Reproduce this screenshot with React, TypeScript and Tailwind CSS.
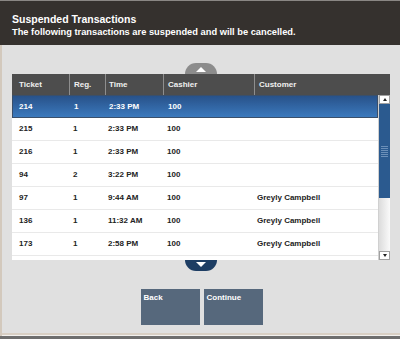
const rows = [
  { ticket: '214', reg: '1', time: '2:33 PM', cashier: '100', customer: '' },
  { ticket: '215', reg: '1', time: '2:33 PM', cashier: '100', customer: '' },
  { ticket: '216', reg: '1', time: '2:33 PM', cashier: '100', customer: '' },
  { ticket: '94', reg: '2', time: '3:22 PM', cashier: '100', customer: '' },
  { ticket: '97', reg: '1', time: '9:44 AM', cashier: '100', customer: 'Greyly Campbell' },
  { ticket: '136', reg: '1', time: '11:32 AM', cashier: '100', customer: 'Greyly Campbell' },
  { ticket: '173', reg: '1', time: '2:58 PM', cashier: '100', customer: 'Greyly Campbell' },
];

const cols = 'grid grid-cols-[57px_36px_58px_91px_1fr]';

export default function App() {
  return (
    <div className="flex h-[339px] w-[400px] flex-col font-['Liberation_Sans',Arial,sans-serif]">
      <div className="flex h-[45px] flex-col border-t border-[#8a8784] bg-[#35312e] pl-3 pt-[12px] font-bold text-white">
        <div className="text-[10.5px] leading-[13px]">Suspended Transactions</div>
        <div className="text-[9.3px] leading-[12px]">The following transactions are suspended and will be cancelled.</div>
      </div>

      <div className="flex flex-1 flex-col border-l-2 border-[#d3c9bd] bg-[#e0e0e0]">
        <div className="ml-[10px] mt-[18px] flex w-[378px] flex-col">
          {/* up chevron */}
          <div className="flex justify-center">
            <div className="flex h-[11px] w-[32px] items-center justify-center rounded-t-full bg-[#8c8c8c] pt-[2px]">
              <div className="h-0 w-0 border-x-[5px] border-b-[5px] border-x-transparent border-b-white" />
            </div>
          </div>

          {/* header */}
          <div className={`${cols} h-[21px] bg-[#4d4d4d] text-[8px] font-bold text-[#f0f0f0]`}>
            <div className="flex items-center pl-[7px]">Ticket</div>
            <div className="flex items-center border-l border-[#8e8e8e] pl-[4px]">Reg.</div>
            <div className="flex items-center border-l border-[#8e8e8e] pl-[3px]">Time</div>
            <div className="flex items-center border-l border-[#8e8e8e] pl-[4px]">Cashier</div>
            <div className="flex items-center border-l border-[#8e8e8e] pl-[4px]">Customer</div>
          </div>

          {/* body */}
          <div className="flex h-[165px] bg-white">
            <div className="flex flex-1 flex-col">
              {rows.map((r, i) =>
                i === 0 ? (
                  <div
                    key={i}
                    className={`${cols} h-[23px] border border-[#3a4f6a] bg-gradient-to-b from-[#28528a] to-[#3b79bd] text-[8px] font-bold text-white`}
                  >
                    <div className="flex items-center pl-[6px]">{r.ticket}</div>
                    <div className="flex items-center pl-[4px]">{r.reg}</div>
                    <div className="flex items-center pl-[3px]">{r.time}</div>
                    <div className="flex items-center pl-[4px]">{r.cashier}</div>
                    <div className="flex items-center pl-[3px]">{r.customer}</div>
                  </div>
                ) : (
                  <div
                    key={i}
                    className={`${cols} h-[23px] border-b border-[#e9e9e9] text-[8px] font-bold text-[#222]`}
                  >
                    <div className="flex items-center pl-[7px]">{r.ticket}</div>
                    <div className="flex items-center pl-[4px]">{r.reg}</div>
                    <div className="flex items-center pl-[3px]">{r.time}</div>
                    <div className="flex items-center pl-[4px]">{r.cashier}</div>
                    <div className="flex items-center pl-[3px]">{r.customer}</div>
                  </div>
                )
              )}
            </div>

            {/* scrollbar */}
            <div className="flex w-[12px] flex-col border-l border-[#d0d0d0] bg-gradient-to-r from-[#e8e8e8] to-[#f8f8f8]">
              <div className="flex h-[9px] items-center justify-center border border-[#a0a0a0] bg-white">
                <div className="h-0 w-0 border-x-[2.5px] border-b-[3px] border-x-transparent border-b-[#222]" />
              </div>
              <div className="flex h-[94px] flex-col items-center justify-center gap-[1px] bg-[#2b5a8f]">
                {[0, 1, 2, 3, 4, 5].map((k) => (
                  <div key={k} className="h-[1px] w-[7px] bg-[#6b8fb8]" />
                ))}
              </div>
              <div className="flex-1 bg-gradient-to-r from-[#dcdcdc] to-[#fafafa]" />
              <div className="flex h-[9px] items-center justify-center border border-[#a0a0a0] bg-white">
                <div className="h-0 w-0 border-x-[2.5px] border-t-[3px] border-x-transparent border-t-[#222]" />
              </div>
            </div>
          </div>

          {/* down chevron */}
          <div className="flex justify-center">
            <div className="flex h-[11px] w-[32px] items-center justify-center rounded-b-full bg-[#1d3d63] pb-[3px]">
              <div className="h-0 w-0 border-x-[5px] border-t-[5px] border-x-transparent border-t-white" />
            </div>
          </div>
        </div>

        {/* buttons */}
        <div className="mt-[18px] flex justify-center gap-[4px] pl-[1px]">
          <div className="h-[36px] w-[59px] bg-[#56687c] px-[3px] pt-[3px] text-[8px] font-bold text-white">Back</div>
          <div className="h-[36px] w-[59px] bg-[#56687c] px-[3px] pt-[3px] text-[8px] font-bold text-white">Continue</div>
        </div>
        <div className="flex-1" />
        <div className="h-[2px] bg-[#d8cfc4]" />
        <div className="h-[1px] bg-[#f2f0ee]" />
      </div>
      <div className="h-[3px] bg-[#6e6e6e]" />
    </div>
  );
}
